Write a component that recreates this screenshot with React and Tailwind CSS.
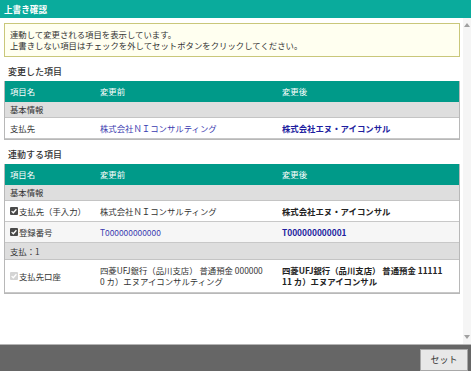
import React from 'react'

const font = { fontFamily: '"Noto Sans CJK JP", "Noto Sans", sans-serif' }

const Check = ({ disabled }) => (
  <span
    className={`inline-flex items-center justify-center w-[8px] h-[8px] mr-[1px] shrink-0 rounded-[1px] ${disabled ? 'bg-[#d4d4d4]' : 'bg-[#4a4a4a]'}`}
  >
    <svg viewBox="0 0 8 8" className="w-[8px] h-[8px]">
      <path d="M1.6 4.1 L3.3 5.7 L6.4 2.2" fill="none" stroke="#fff" strokeWidth="1.3" />
    </svg>
  </span>
)

const HeaderRow = () => (
  <div className="grid grid-cols-[91px_182px_1fr] h-[21px] items-center bg-[#009a89] text-white">
    <div className="pl-[5px]">項目名</div>
    <div className="pl-[4px]">変更前</div>
    <div className="pl-[4px]">変更後</div>
  </div>
)

const GroupRow = ({ label, tall }) => (
  <div className={`flex items-center bg-[#dedede] border-b border-[#c4c4c4] pl-[5px] ${tall ? 'h-[17px]' : 'h-[16px]'}`}>
    {label}
  </div>
)

const DataRow = ({ name, before, after, checked, disabled, beforeClass, afterClass, bg = 'bg-white', tall }) => (
  <div
    className={`grid grid-cols-[91px_182px_1fr] items-center border-b border-[#c8c8c8] ${bg} ${tall ? 'h-[33px]' : 'h-[21px]'}`}
  >
    <div className="pl-[5px] flex items-center">
      {checked && <Check disabled={disabled} />}
      <span>{name}</span>
    </div>
    <div className={`pl-[4px] pr-[12px] leading-[11px] break-all ${beforeClass || ''}`}>{before}</div>
    <div className={`pl-[4px] pr-[14px] leading-[11px] break-all font-bold ${afterClass || ''}`}>{after}</div>
  </div>
)

const Table = ({ children }) => (
  <div className="border-x border-b border-[#b8b8b8]">
    <HeaderRow />
    {children}
  </div>
)

export default function App() {
  return (
    <div className="w-[471px] h-[371px] flex flex-col bg-white text-[8.4px] text-[#333]" style={font}>
      {/* title bar */}
      <div className="h-[18px] shrink-0 bg-[#0aab9c] text-white font-bold flex items-center pl-[4px] text-[8.6px]">
        上書き確認
      </div>

      <div className="flex flex-1 min-h-0">
        <div className="flex-1 pl-[4px] pr-[3px] pt-[5px]">
          {/* notice */}
          <div className="border border-[#c9c77a] bg-[#fffff0] pl-[5px] pt-[5px] pb-[5px] leading-[11px] text-[#333]">
            <p>連動して変更される項目を表示しています。</p>
            <p>上書きしない項目はチェックを外してセットボタンをクリックしてください。</p>
          </div>

          <h3 className="mt-[6px] h-[18px] leading-[18px] pl-[4px] text-[9px] font-medium text-[#333]">変更した項目</h3>
          <Table>
            <GroupRow label="基本情報" />
            <DataRow
              name="支払先"
              before="株式会社ＮＩコンサルティング"
              after="株式会社エヌ・アイコンサル"
              beforeClass="text-[#3b3bb0]"
              afterClass="text-[#1e1ea0]"
            />
          </Table>

          <h3 className="mt-[6px] h-[18px] leading-[18px] pl-[4px] text-[9px] font-medium text-[#333]">連動する項目</h3>
          <Table>
            <GroupRow label="基本情報" />
            <DataRow
              name="支払先（手入力）"
              checked
              before="株式会社ＮＩコンサルティング"
              after="株式会社エヌ・アイコンサル"
              afterClass="text-[#222]"
            />
            <DataRow
              name="登録番号"
              checked
              bg="bg-[#f6f6f6]"
              before="T000000000000"
              after="T000000000001"
              beforeClass="text-[#3b3bb0]"
              afterClass="text-[#1e1ea0]"
            />
            <GroupRow label="支払：1" tall />
            <DataRow
              name="支払先口座"
              checked
              disabled
              tall
              before="四菱UFJ銀行（品川支店） 普通預金 0000000 カ）エヌアイコンサルティング"
              after="四菱UFJ銀行（品川支店） 普通預金 1111111 カ）エヌアイコンサル"
              afterClass="text-[#222]"
            />
          </Table>
        </div>

        {/* scrollbar */}
        <div className="w-[8px] shrink-0 bg-[#f5f5f5] flex flex-col justify-between items-center py-[5px]">
          <svg viewBox="0 0 6 4" className="w-[6px] h-[4px]">
            <path d="M0 4 L3 0 L6 4 Z" fill="#a0a0a0" />
          </svg>
          <svg viewBox="0 0 6 4" className="w-[6px] h-[4px]">
            <path d="M0 0 L3 4 L6 0 Z" fill="#a0a0a0" />
          </svg>
        </div>
      </div>

      {/* footer */}
      <div className="h-[27px] shrink-0 bg-[#666] border-t border-[#b5b5b5] flex justify-end items-start pt-[4px] pr-[3px]">
        <button className="w-[48px] h-[22px] bg-[#e8e8e8] border border-[#a8a8a8] text-[9px] text-[#333]">
          セット
        </button>
      </div>
    </div>
  )
}
